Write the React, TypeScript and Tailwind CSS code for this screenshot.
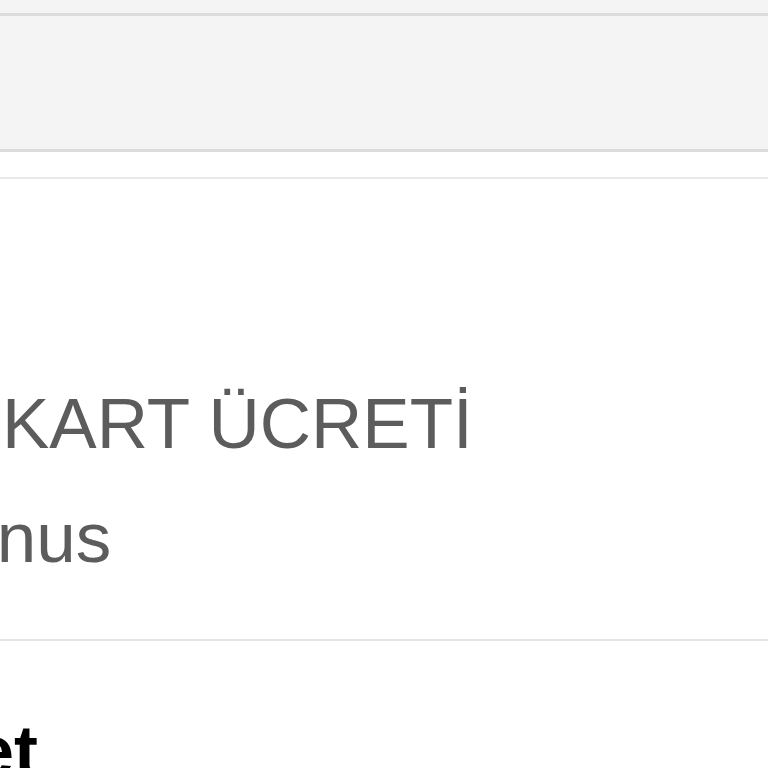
export default function App() {
  return (
    <div className="w-[768px] h-[768px] overflow-hidden bg-white relative" style={{ fontFamily: '"Liberation Sans", Arial, sans-serif' }}>
      <div className="h-[13px] bg-[#f4f4f4]" />
      <div className="h-[139px] bg-[#f4f4f4] border-y-[3px] border-[#dcdcdc]" />
      <div className="h-[25px] bg-white" />
      <div className="h-[462px] border-t-2 border-[#e8e8e8] relative">
        <div className="absolute left-[2px] top-[209px] whitespace-nowrap text-[71px] leading-none text-[#5c5c5c]">KART ÜCRETİ</div>
        <div className="absolute left-[-90px] top-[323px] whitespace-nowrap text-[71px] leading-none text-[#5c5c5c]">Bonus</div>
      </div>
      <div className="border-t-2 border-[#e4e4e4] relative h-[200px]">
        <div className="absolute left-[-26px] top-[74px] whitespace-nowrap text-[72px] leading-none font-bold text-black">et</div>
      </div>
    </div>
  );
}
